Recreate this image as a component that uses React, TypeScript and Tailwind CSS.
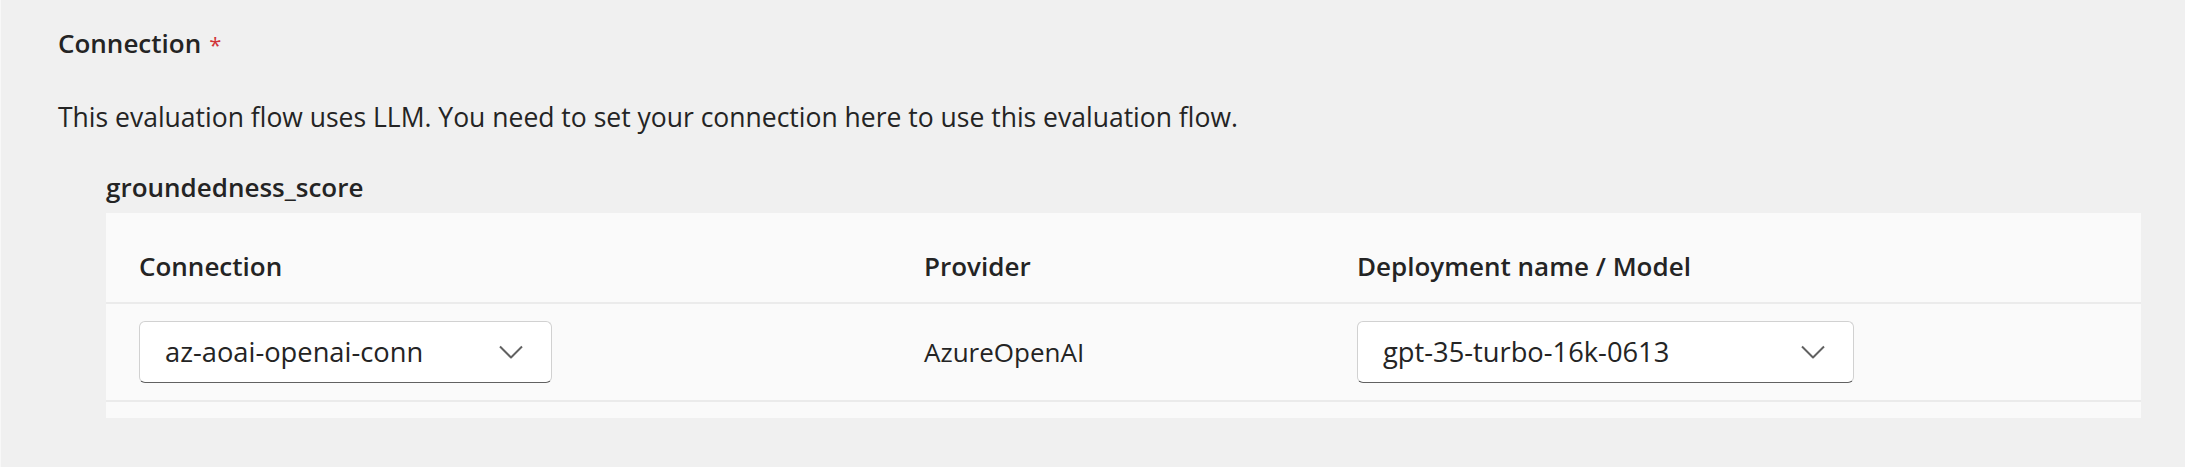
import React from 'react';

const font = { fontFamily: '"Open Sans", "Noto Sans", sans-serif' };

function Chevron() {
  return (
    <svg width="24" height="14" viewBox="0 0 24 14" fill="none" className="shrink-0">
      <polyline points="1,1.5 12,12.5 23,1.5" stroke="#616161" strokeWidth="2" strokeLinejoin="round" />
    </svg>
  );
}

function Dropdown({ value, width }: { value: string; width: string }) {
  return (
    <div
      className={`flex h-[62px] items-center justify-between rounded-[6px] border border-[#d1d1d1] border-b-[#616161] bg-white pl-[25px] pr-[28px] ${width}`}
    >
      <span className="text-[27.3px] text-[#242424]">{value}</span>
      <Chevron />
    </div>
  );
}

export default function App() {
  return (
    <div style={font} className="h-[467px] w-[2185px] overflow-hidden border-l border-[#f8f8f8] bg-[#f0f0f0] text-[#242424]">
      <div className="pl-[57px] pt-[24px]">
        <div className="flex items-baseline gap-[8px] text-[26px] font-semibold leading-[38px]">
          <span>Connection</span>
          <span className="text-[22px] font-normal text-[#d13438]">*</span>
        </div>
        <p className="mt-[35px] text-[26.5px] leading-[38px]">
          This evaluation flow uses LLM. You need to set your connection here to use this evaluation flow.
        </p>
      </div>

      <div className="ml-[105px] mt-[32px] w-[2035px]">
        <div className="text-[26px] font-semibold leading-[38px]">groundedness_score</div>
        <div className="mt-[7px] bg-[#fafafa]">
          <div className="grid h-[91px] grid-cols-[785px_433px_1fr] items-end border-b-2 border-[#ebebeb] pb-[17px] pl-[33px] text-[26px] font-semibold leading-[38px]">
            <div>Connection</div>
            <div>Provider</div>
            <div>Deployment name / Model</div>
          </div>
          <div className="grid h-[98px] grid-cols-[785px_433px_1fr] items-center border-b-2 border-[#ebebeb] pl-[33px] text-[26px] leading-[38px]">
            <Dropdown value="az-aoai-openai-conn" width="w-[413px]" />
            <div>AzureOpenAI</div>
            <Dropdown value="gpt-35-turbo-16k-0613" width="w-[497px]" />
          </div>
          <div className="h-[16px]" />
        </div>
      </div>
    </div>
  );
}
